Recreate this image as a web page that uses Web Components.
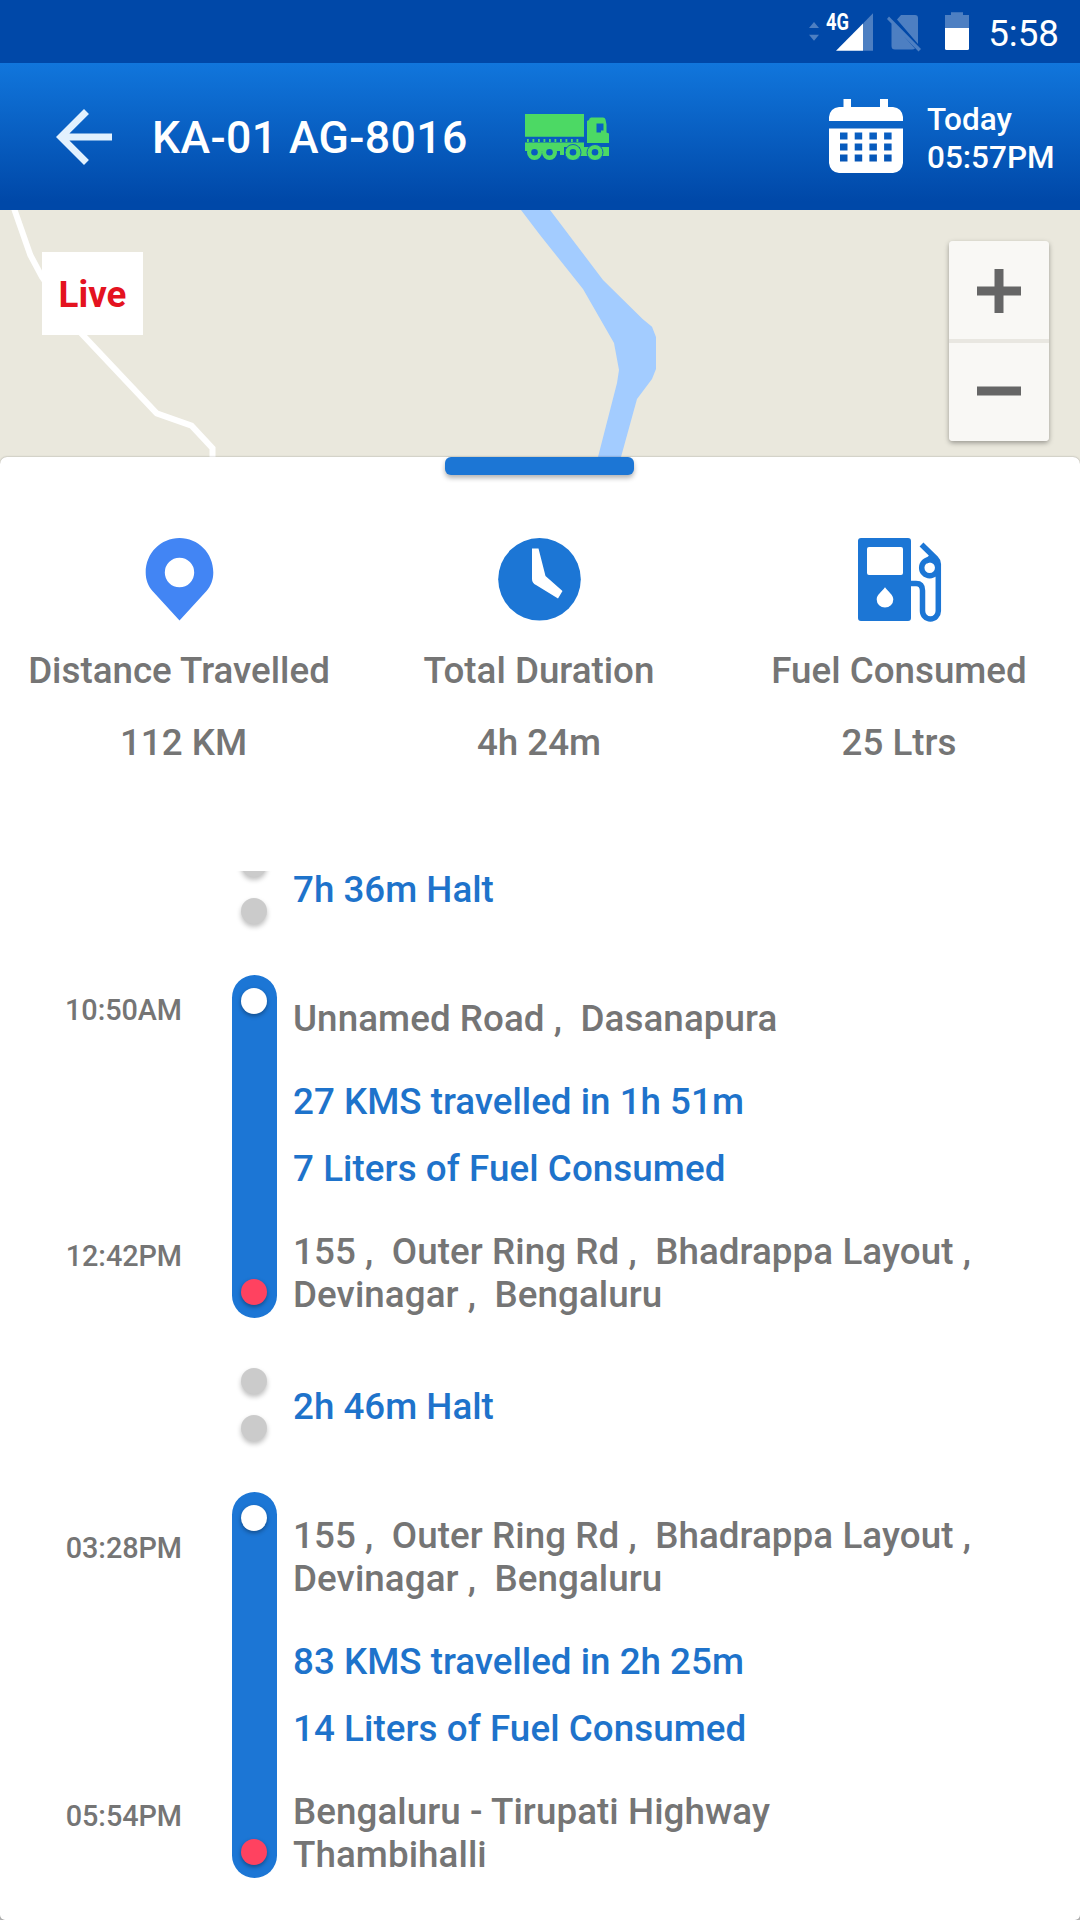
<!DOCTYPE html>
<html lang="en">
<head>
<meta charset="utf-8">
<title>KA-01 AG-8016</title>
<style>
  html { background: #b8b8b8; }
  body { margin: 0; width: 1080px; height: 1920px; overflow: hidden; display: flex; flex-direction: column; font-family: Roboto, "Liberation Sans", sans-serif; font-size: 36.75px; line-height: 43px; font-weight: 500; color: #757575; }
</style>
</head>
<body>
<status-bar time="5:58"></status-bar>
<trip-header vehicle="KA-01 AG-8016" day="Today" time="05:57PM"></trip-header>
<trip-map></trip-map>
<bottom-sheet>
  <stat-item slot="stats" icon="pin" label="Distance Travelled" value="&nbsp;112 KM"></stat-item>
  <stat-item slot="stats" icon="clock" label="Total Duration" value="4h 24m"></stat-item>
  <stat-item slot="stats" icon="fuel" label="Fuel Consumed" value="25 Ltrs"></stat-item>
  <halt-row>7h 36m Halt</halt-row>
  <trip-row start="10:50AM" end="12:42PM">
    <span slot="from">Unnamed Road ,&nbsp; Dasanapura</span>
    <span slot="distance">27 KMS travelled in 1h 51m</span>
    <span slot="fuel">7 Liters of Fuel Consumed</span>
    <span slot="to">155 ,&nbsp; Outer Ring Rd ,&nbsp; Bhadrappa Layout ,<br>Devinagar ,&nbsp; Bengaluru</span>
  </trip-row>
  <halt-row>2h 46m Halt</halt-row>
  <trip-row start="03:28PM" end="05:54PM">
    <span slot="from">155 ,&nbsp; Outer Ring Rd ,&nbsp; Bhadrappa Layout ,<br>Devinagar ,&nbsp; Bengaluru</span>
    <span slot="distance">83 KMS travelled in 2h 25m</span>
    <span slot="fuel">14 Liters of Fuel Consumed</span>
    <span slot="to">Bengaluru - Tirupati Highway<br>Thambihalli</span>
  </trip-row>
</bottom-sheet>

<script>
class StatusBar extends HTMLElement {
  constructor() {
    super();
    this.attachShadow({ mode: 'open' });
  }
  connectedCallback() {
    this.shadowRoot.innerHTML = `
      <style>
        :host { display:flex; flex:none; align-items:center; justify-content:flex-end; height:63px; padding-right:21px; box-sizing:border-box; background:#0048a8; color:#fff; }
        svg { flex:none; display:block; fill:#fff; }
        .dim { opacity:.3; }
        .signal { margin-left:7px; }
        .sim { margin-left:14px; }
        .battery { margin-left:23px; }
        .time { margin-left:19px; font-weight:400; padding-top:3px; }
        text { font:700 23.500px Roboto, sans-serif; }
      </style>
      <svg width="10" height="63" viewBox="0 0 10 63"><path class="dim" d="M0 28l5-6 5 6zM0 34.700h10l-5 6z"/></svg>
      <svg class="signal" width="47" height="63" viewBox="0 0 47 63">
        <path class="dim" d="M37 23.500L47 13.300V50.700H37z"/>
        <path d="M10 50.700L37 23.500V50.700z"/>
        <text x="0" y="30" textLength="23" lengthAdjust="spacingAndGlyphs">4G</text>
      </svg>
      <svg class="sim" width="35" height="63" viewBox="0 0 35 63">
        <path class="dim" d="M14 15h14q3 0 3 3v26L10 19.500zM4.500 23L28 48.500q-1 1-3 1H8q-3.500 0-3.500-3.500zM2 16.500L34 49l-2.500 2.500L0 19z"/>
      </svg>
      <svg class="battery" width="24" height="63" viewBox="0 0 24 63">
        <path class="dim" d="M6 12.300h12V15h6v13H0V15h6z"/>
        <path d="M0 28h24v20.500q0 1.500-1.500 1.500h-21Q0 50 0 48.500z"/>
      </svg>
      <span class="time">${this.getAttribute('time')}</span>
    `;
  }
}
customElements.define('status-bar', StatusBar);

class TripHeader extends HTMLElement {
  constructor() {
    super();
    this.attachShadow({ mode: 'open' });
  }
  connectedCallback() {
    this.shadowRoot.innerHTML = `
      <style>
        :host { display:flex; flex:none; align-items:center; height:147px; padding:0 22px 0 56px; box-sizing:border-box; color:#fff; background:linear-gradient(#1176dc, #0048a8 94%); }
        svg { flex:none; display:block; }
        .vehicle { margin-left:40px; width:373px; font-size:44.600px; line-height:52px; letter-spacing:.38px; white-space:nowrap; padding-top:3px; }
        .calendar { margin-left:219px; }
        .date { margin-left:24px; font-size:31.500px; line-height:37.500px; padding-top:4px; white-space:nowrap; }
      </style>
      <svg width="56" height="56" viewBox="4 4 16 16"><path fill="#e2f1fe" d="M20 11H7.830l5.590-5.590L12 4l-8 8 8 8 1.410-1.410L7.830 13H20v-2z"/></svg>
      <div class="vehicle">${this.getAttribute('vehicle')}</div>
      <svg width="85" height="46" viewBox="0 0 85 46" fill="#4cd964">
        <path d="M0 0h59v22.700H0z"/>
        <path d="M2 26.500H57" stroke="#4cd964" stroke-width="3" stroke-dasharray="1.800 3.700"/>
        <path d="M0 28.500h59V33H39v8h-4v-4H0z"/>
        <path d="M64 6q0-2 2-2.500h12q2 0 2.500 2l1 5v8l2.500 1v9.500H62V7zM71.500 9.500v9h4.500v-2h2.500v-7z" fill-rule="evenodd"/>
        <path d="M55 33h29v9H55z"/>
        <g stroke="#0a60c4" stroke-width="1">
          <circle cx="48" cy="38.500" r="8"/><circle cx="70" cy="38.500" r="8"/>
        </g>
        <circle cx="9.500" cy="38.500" r="7.500"/><circle cx="24.500" cy="38.500" r="7.500"/>
        <g fill="#085bc0"><circle cx="9.500" cy="38.300" r="3.300"/><circle cx="24.500" cy="38.300" r="3.300"/><circle cx="48" cy="38.300" r="3.300"/><circle cx="70" cy="38.300" r="3.300"/></g>
      </svg>
      <svg class="calendar" width="74" height="75" viewBox="0 0 74 75" fill="#fff">
        <path d="M0 22V18Q1 9 10 8h4.500V0H22v8h29V0h8v8h5q9 1 10 10v4z"/>
        <path fill-rule="evenodd" d="M0 29.500h74V64q-1 9-10 10H10Q1 73 0 64zM11 33.500v7h7.500v-7zm14.700 0v7h7.500v-7zm14.700 0v7h7.500v-7zm14.700 0v7h7.500v-7zM11 44.500v7h7.500v-7zm14.700 0v7h7.500v-7zm14.700 0v7h7.500v-7zm14.700 0v7h7.500v-7zM11 55.500v7h7.500v-7zm14.700 0v7h7.500v-7zm14.700 0v7h7.500v-7zm14.700 0v7h7.500v-7z"/>
      </svg>
      <div class="date"><div>${this.getAttribute('day')}</div><div>${this.getAttribute('time')}</div></div>
    `;
  }
}
customElements.define('trip-header', TripHeader);

class TripMap extends HTMLElement {
  constructor() {
    super();
    this.attachShadow({ mode: 'open' });
  }
  connectedCallback() {
    this.shadowRoot.innerHTML = `
      <style>
        :host { display:block; flex:none; position:relative; height:255px; background:#eae8dd; }
        .tiles { display:block; }
        .live { position:absolute; left:42px; top:42px; width:101px; height:83px; background:#fff; color:#e41320; font-weight:700; line-height:86px; text-align:center; }
        .zoom { position:absolute; left:949px; top:31px; width:100px; height:200px; display:flex; flex-direction:column; gap:4px; border-radius:4px; overflow:hidden; background:#e9e7e1; }
        .shadow { position:absolute; left:949px; top:31px; width:100px; height:200px; border-radius:4px; box-shadow:0 2px 5px rgba(0,0,0,.35); }
        .btn { flex:1; display:flex; align-items:center; justify-content:center; background:#f9f8f5; }
      </style>
      <svg class="tiles" width="1080" height="255" viewBox="0 0 1080 255">
        <path fill="#a3ccff" d="M521 0L540 25 583 79 614 133 619 160 617 173 598 247V255H619L621 247 637 189 652 169 656 159V127L652 116.700 642.600 109 603 70 550 0z"/>
        <path fill="none" stroke="#fff" stroke-width="6" d="M13.500-3L30.300 45 42 67 81 123 156.700 203.300 191.500 215.700 212.500 238.300V255"/>
      </svg>
      <div class="live">Live</div>
      <div class="shadow"></div>
      <div class="zoom">
        <div class="btn"><svg width="44" height="46" viewBox="0 0 44 46"><path stroke="#666" stroke-width="9" d="M0 24h44M22 2v44"/></svg></div>
        <div class="btn"><svg width="44" height="44" viewBox="0 0 44 44"><path stroke="#666" stroke-width="9" d="M0 21h44"/></svg></div>
      </div>
    `;
  }
}
customElements.define('trip-map', TripMap);

class BottomSheet extends HTMLElement {
  constructor() {
    super();
    this.attachShadow({ mode: 'open' });
  }
  connectedCallback() {
    this.shadowRoot.innerHTML = `
      <style>
        :host { display:flex; flex-direction:column; flex:1; min-height:0; margin-top:-8px; position:relative; background:#fff; border-radius:7px 7px 5px 5px; box-shadow:0 0 2px rgba(0,0,0,.35); }
        .handle { flex:none; align-self:center; width:189px; height:18px; margin-right:1px; border-radius:6px; background:#1c76d5; box-shadow:0 3px 5px rgba(0,0,0,.3); }
        .stats { flex:none; display:grid; grid-template-columns:repeat(3, 1fr); padding:63px 1px 0 0; margin-left:-1px; height:333px; box-sizing:border-box; }
        /* trips are scrolled to the newest one, older ones run off the top */
        .trips { flex:1; min-height:0; overflow:hidden; display:flex; flex-direction:column; justify-content:flex-end; padding-bottom:42px; margin-top:63px; }
      </style>
      <div class="handle"></div>
      <div class="stats"><slot name="stats"></slot></div>
      <div class="trips"><slot></slot></div>
    `;
  }
}
customElements.define('bottom-sheet', BottomSheet);

const statIcons = {
  pin: '<path fill="#4285f4" fill-rule="evenodd" d="M41.500 0C23 0 7.700 15 7.700 34.500c0 7 2.300 13.500 6.800 18.500l27 29.500L68.500 53c4.500-5 6.800-11.500 6.800-18.500C75.300 15 60 0 41.500 0zm0 19.800a14.700 14.700 0 1 1 0 29.400 14.700 14.700 0 0 1 0-29.400z"/>',
  clock: '<circle cx="41.500" cy="41.300" r="41.300"/><path fill="#fff" d="M34 10.500h6.500L47.500 38 64.500 53l-4.500 7.500L38 47q-4-2-4-6z"/>',
  fuel: `
    <path fill-rule="evenodd" d="M3 0h47q3 0 3 3v77q0 3-3 3H3q-3 0-3-3V3q0-3 3-3zM11 9q-2 0-2 2v24q0 2 2 2h32q2 0 2-2V11q0-2-2-2zM27 49.300C23.500 54 18.700 57 18.700 61.500a8.300 8 0 0 0 16.600 0C35.300 57 30.500 54 27 49.300z"/>
    <g fill="none" stroke="#1c76d5" stroke-width="5.500">
      <path d="M52 45.500h6q6.500 0 6.500 7V73a7.900 8 0 0 0 15.800 0V26q0-3-2.500-5.500L63.500 6.500"/>
      <circle cx="71.700" cy="29.700" r="8"/><path d="M74.500 16.500q-1 4-6.500 6.500"/>
    </g>`
};

class StatItem extends HTMLElement {
  constructor() {
    super();
    this.attachShadow({ mode: 'open' });
  }
  connectedCallback() {
    this.shadowRoot.innerHTML = `
      <style>
        :host { display:flex; flex-direction:column; align-items:center; white-space:nowrap; }
        svg { display:block; overflow:visible; margin-bottom:28px; }
        .value { margin-top:29px; }
      </style>
      <svg width="83" height="83" viewBox="0 0 83 83" fill="#1c76d5">${statIcons[this.getAttribute('icon')]}</svg>
      <div>${this.getAttribute('label')}</div>
      <div class="value">${this.getAttribute('value')}</div>
    `;
  }
}
customElements.define('stat-item', StatItem);

class HaltRow extends HTMLElement {
  constructor() {
    super();
    this.attachShadow({ mode: 'open' });
  }
  connectedCallback() {
    this.shadowRoot.innerHTML = `
      <style>
        :host { display:flex; flex:none; align-items:center; height:174px; padding-left:241px; color:#1e73cb; }
        .dots { display:flex; flex-direction:column; gap:21px; width:52px; padding-bottom:2px; }
        .dot { width:26px; height:26px; border-radius:50%; background:#cbcbcb; box-shadow:0 3px 5px rgba(0,0,0,.25); }
        .label { padding-top:2px; }
      </style>
      <div class="dots"><div class="dot"></div><div class="dot"></div></div>
      <div class="label"><slot></slot></div>
    `;
  }
}
customElements.define('halt-row', HaltRow);

class TripRow extends HTMLElement {
  constructor() {
    super();
    this.attachShadow({ mode: 'open' });
  }
  connectedCallback() {
    this.shadowRoot.innerHTML = `
      <style>
        :host { display:grid; flex:none; grid-template-columns:182px 45px 1fr; padding:22px 0 2px; }
        .time { grid-column:1; font-size:28.800px; line-height:34px; letter-spacing:-.05px; text-align:right; align-self:center; }
        .start { grid-row:1; padding-bottom:18px; margin:-10px 0; }
        .end { grid-row:4; padding-bottom:34px; }
        .bar { grid-column:2; grid-row:1 / 5; width:45px; box-sizing:border-box; margin:-22px 0 -2px 50px; padding:13px 10px 13px 9px; display:flex; flex-direction:column; justify-content:space-between; background:#1c76d5; border-radius:23px; }
        .dot { width:26px; height:26px; border-radius:50%; background:#fff; box-shadow:0 2px 4px rgba(0,0,0,.35); }
        .dot.stop { background:#ff4260; }
        .text { grid-column:3; padding-left:66px; white-space:nowrap; letter-spacing:.07px; }
        .blue { color:#1e73cb; }
        .distance { margin-top:40px; letter-spacing:0; }
        .fuel { margin:24px 0 40px; }
      </style>
      <div class="time start">${this.getAttribute('start')}</div>
      <div class="time end">${this.getAttribute('end')}</div>
      <div class="bar"><div class="dot"></div><div class="dot stop"></div></div>
      <div class="text"><slot name="from"></slot></div>
      <div class="text blue distance"><slot name="distance"></slot></div>
      <div class="text blue fuel"><slot name="fuel"></slot></div>
      <div class="text"><slot name="to"></slot></div>
    `;
  }
}
customElements.define('trip-row', TripRow);
</script>
</body>
</html>
